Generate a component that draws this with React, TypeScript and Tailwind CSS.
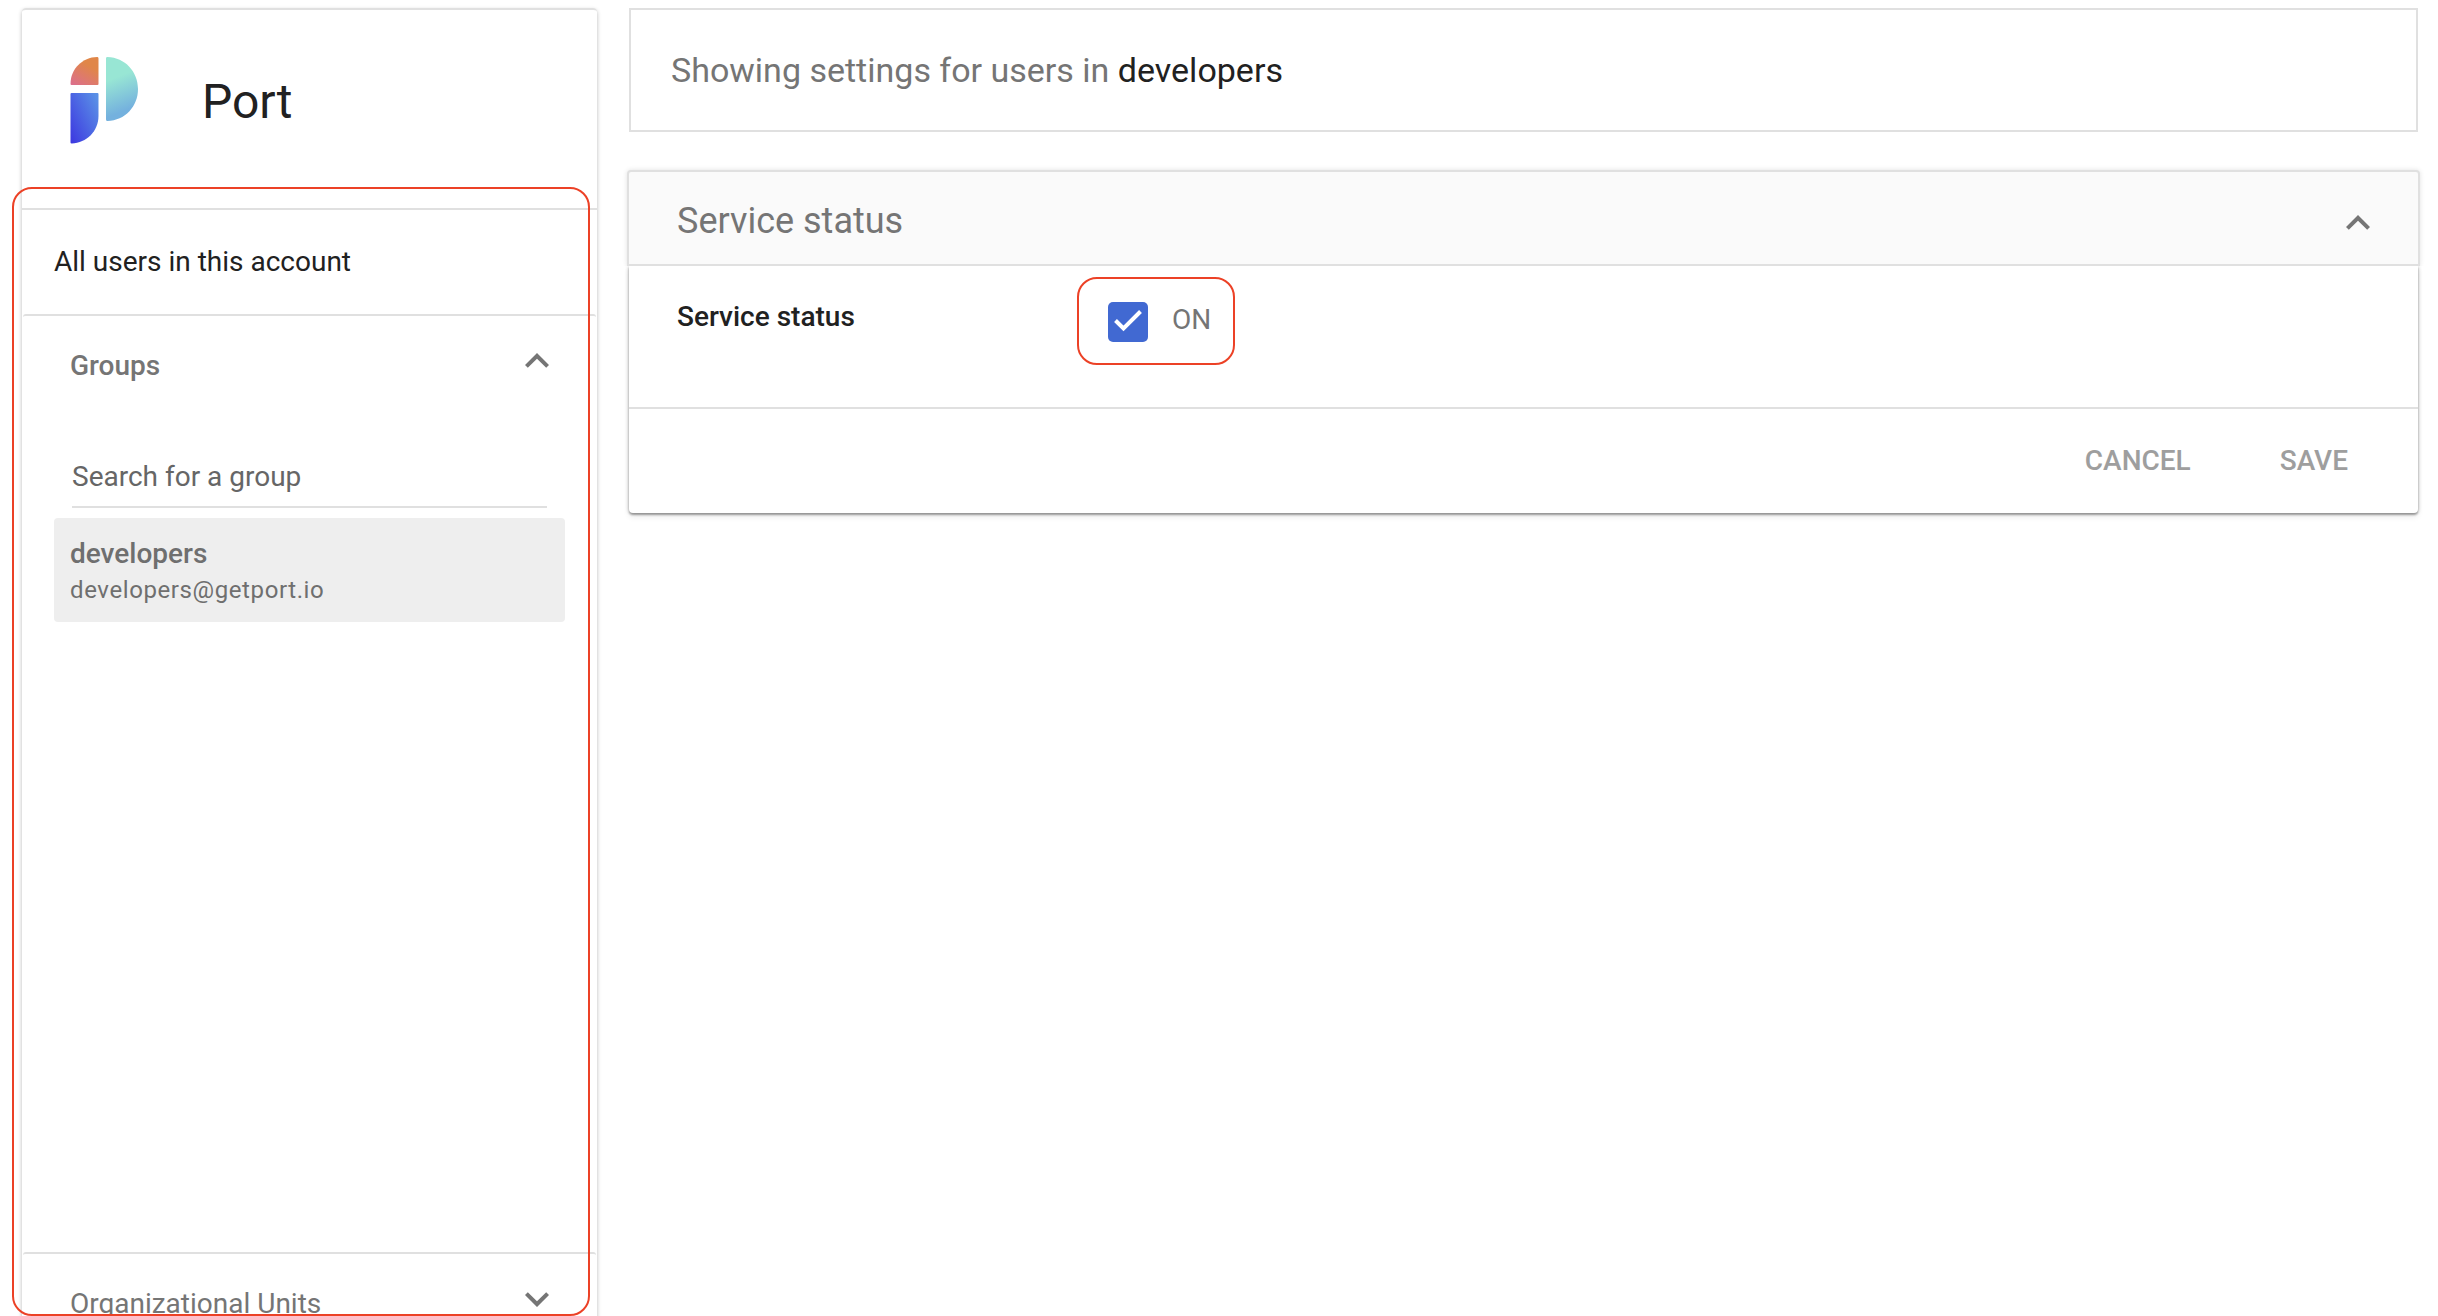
function ExpandLess({ className = "" }: { className?: string }) {
  return (
    <svg viewBox="0 0 24 24" className={`size-12 shrink-0 fill-[#757575] ${className}`}>
      <path d="M12 8l-6 6 1.41 1.41L12 10.83l4.59 4.58L18 14z" />
    </svg>
  );
}

function ExpandMore({ className = "" }: { className?: string }) {
  return (
    <svg viewBox="0 0 24 24" className={`size-12 shrink-0 fill-[#757575] ${className}`}>
      <path d="M16.59 8.59L12 13.17 7.41 8.59 6 10l6 6 6-6z" />
    </svg>
  );
}

function PortLogo() {
  return (
    <svg viewBox="0 0 68 87" className="h-[87px] w-[68px] shrink-0">
      <defs>
        <linearGradient id="orange" x1="0.1" y1="1" x2="0.65" y2="0.1">
          <stop offset="0" stopColor="#dc6f8c" />
          <stop offset="0.85" stopColor="#e08648" />
        </linearGradient>
        <linearGradient id="teal" x1="0.35" y1="0" x2="0.55" y2="1">
          <stop offset="0.3" stopColor="#98e6d4" />
          <stop offset="0.85" stopColor="#74b1de" />
        </linearGradient>
        <linearGradient id="blue" x1="0" y1="1" x2="1" y2="0.15">
          <stop offset="0" stopColor="#3c36e0" />
          <stop offset="1" stopColor="#5a90e6" />
        </linearGradient>
      </defs>
      <path d="M28.500 1.5V27q0 1-1 1H1.500q-1 0-1-1C0.500 12 12.500 0.3 27.100 0.1q1.4 0 1.4 1.4z" fill="url(#orange)" />
      <path d="M36 1.5Q36 0 37.5 0.1C55 0.8 68 14.500 68 32S55 63.500 37.500 64Q36 64 36 62.500z" fill="url(#teal)" />
      <path d="M1.500 36H27.500q1 0 1 1V59C28.500 74 16.500 86 1.700 86.500Q0.500 86.500 0.500 85.500V37q0-1 1-1z" fill="url(#blue)" />
    </svg>
  );
}

function Sidebar() {
  return (
    <aside className="ml-[22px] flex h-[1320px] w-[575px] shrink-0 flex-col rounded-[4px] bg-white shadow-[0_2px_4px_rgba(0,0,0,0.28)]">
      <div className="flex h-[200px] items-start rounded-t-[4px] border-t-2 border-[#e0e0e0] pl-12">
        <div className="pt-[47px]">
          <PortLogo />
        </div>
        <h1 className="ml-16 pt-[63px] text-[48px] leading-[57px] text-[#212121]">Port</h1>
      </div>
      <div className="h-[106px] border-t-2 border-[#e0e0e0] pt-[35px] pl-8 text-[28px] leading-[33px] text-[#212121]">
        All users in this account
      </div>
      <section className="mx-px flex-1 rounded-t-[3px] border-t-2 border-[#e0e0e0]">
        <div className="flex h-[66px] items-start justify-between pr-[35px] pl-[47px]">
          <h2 className="pt-[33px] text-[28px] leading-[33px] font-medium text-[#757575]">Groups</h2>
          <ExpandLess className="mt-[21px]" />
        </div>
        <div className="mt-[78px] mr-[49px] ml-[49px] h-12 border-b-2 border-[#e0e0e0] text-[28px] leading-[33px] text-[#666666]">
          Search for a group
        </div>
        <div className="mt-2.5 mr-[31px] ml-[31px] h-[104px] rounded-[4px] bg-[#eeeeee] pt-[19px] pl-4 text-[#6f6f6f]">
          <p className="text-[28px] leading-[33px] font-medium">developers</p>
          <p className="mt-1.5 text-[24px] leading-[28px] tracking-[0.6px]">developers@getport.io</p>
        </div>
      </section>
      <section className="mx-px flex h-[76px] items-start justify-between rounded-t-[3px] border-t-2 border-[#e0e0e0] pr-[35px] pl-[47px]">
        <h2 className="pt-[33px] text-[28px] leading-[33px] text-[#757575]">Organizational Units</h2>
        <ExpandMore className="mt-[21px]" />
      </section>
    </aside>
  );
}

function Checkbox() {
  return (
    <span className="size-10 shrink-0 rounded-[5px] bg-[#4169d2]">
      <svg viewBox="0 0 40 40" className="size-10 fill-none stroke-white stroke-[4]">
        <path d="M7.500 18.500L15.500 26.500L32.500 9.500" />
      </svg>
    </span>
  );
}

function StatusCard() {
  return (
    <section className="mt-[38px] flex flex-col">
      <div className="relative -mx-[2px] flex h-24 items-start justify-between rounded-t-[4px] border-2 border-[#e0e0e0] bg-[#fafafa] pr-9 pl-12 shadow-[0_0_5px_rgba(0,0,0,0.12)] [clip-path:inset(-8px_-8px_0_-8px)]">
        <h2 className="pt-7 text-[36px] leading-[42px] text-[#757575]">Service status</h2>
        <ExpandLess className="mt-[27px]" />
      </div>
      <div className="rounded-b-[4px] bg-white shadow-[0_0_4px_rgba(0,0,0,0.24),0_2px_2px_rgba(0,0,0,0.3),0_4px_6px_rgba(0,0,0,0.08)]">
        <div className="flex h-[141px] items-start pl-12">
          <h3 className="w-[400px] pt-[34px] text-[28px] leading-[33px] font-medium text-[#212121]">Service status</h3>
          <label className="mt-[11px] flex h-[88px] w-[158px] items-start rounded-[20px] border-2 border-[#ec4126] pt-[23px] pl-[29px]">
            <Checkbox />
            <span className="mt-px ml-6 text-[28px] leading-[33px] text-[#757575]">ON</span>
          </label>
        </div>
        <div className="flex h-[106px] items-start justify-end border-t-2 border-[#e0e0e0] pt-[35px] pr-[70px] text-[28px] leading-[33px] font-medium text-[#9e9e9e]">
          <button className="mr-[89px]">CANCEL</button>
          <button>SAVE</button>
        </div>
      </div>
    </section>
  );
}

export default function App() {
  return (
    <div className="relative flex h-[1316px] w-[2438px] items-start overflow-hidden bg-white pt-2 font-['Roboto',sans-serif]">
      <Sidebar />
      <main className="ml-8 w-[1789px]">
        <div className="h-[124px] border-2 border-[#e0e0e0] pt-10 pl-10 text-[34px] leading-[40px] text-[#757575]">
          Showing settings for users in <span className="text-[#212121]">developers</span>
        </div>
        <StatusCard />
      </main>
      <div className="pointer-events-none absolute top-[187px] left-3 h-[1129px] w-[578px] rounded-[20px] border-2 border-[#ec4126]" />
    </div>
  );
}
